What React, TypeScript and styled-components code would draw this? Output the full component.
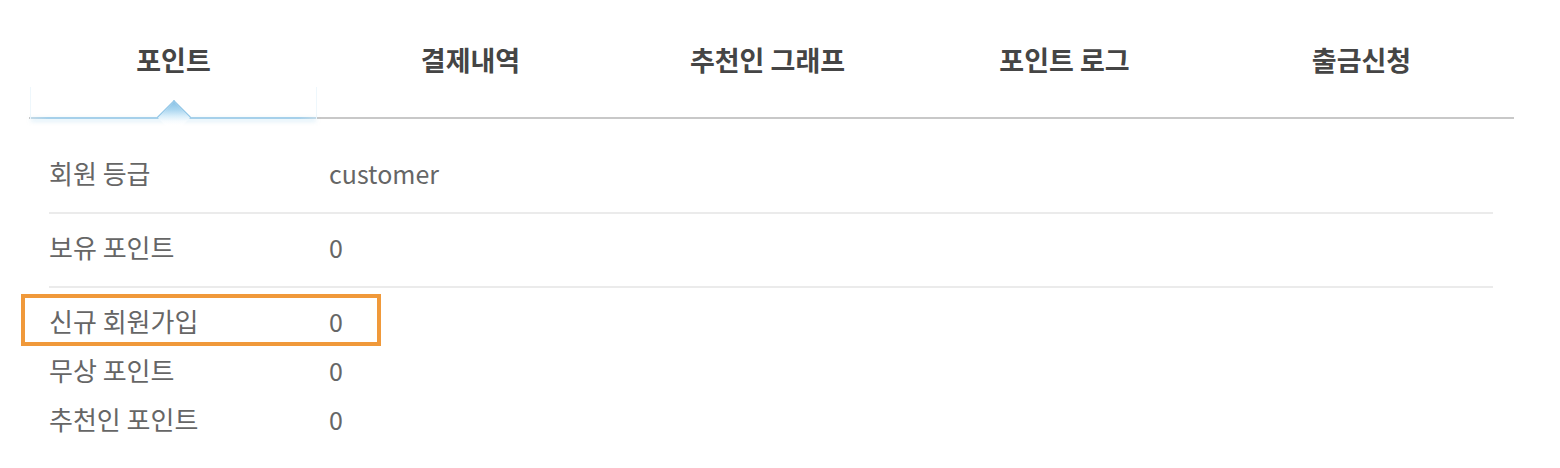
import React from "react";
import styled, { createGlobalStyle } from "styled-components";

const GlobalStyle = createGlobalStyle`
  html, body {
    margin: 0;
    padding: 0;
    background: #ffffff;
  }
  body {
    font-family: "Noto Sans CJK KR", "Noto Sans", sans-serif;
  }
`;

const Page = styled.div`
  width: 1560px;
  height: 468px;
  overflow: hidden;
  background: #fff;
`;

const TabBar = styled.nav`
  display: flex;
  margin-left: 29px;
  width: 1485px;
  border-bottom: 2px solid #c8c8c8;
`;

const Tab = styled.div<{ $active?: boolean }>`
  position: relative;
  width: 297px;
  height: 117px;
  box-sizing: border-box;
  padding: 42px 8px 0 0;
  display: flex;
  justify-content: center;
  align-items: flex-start;
  font-size: 27px;
  line-height: 36px;
  font-weight: 700;
  color: #454545;
  cursor: pointer;
`;

const ActiveMark = styled.span`
  position: absolute;
  left: 1px;
  right: 9px;
  top: 87px;
  bottom: -2px;
  border-left: 1px solid #eef7fc;
  border-right: 1px solid #eef7fc;
  pointer-events: none;

  &::after {
    content: "";
    position: absolute;
    left: 0;
    right: 0;
    bottom: 0;
    height: 2px;
    background: linear-gradient(
      to right,
      #c3d9e6 0%,
      #a6d0ea 6%,
      #a6d0ea 94%,
      #c3d9e6 100%
    );
    box-shadow: 0 2px 4px rgba(150, 205, 236, 0.5);
  }
`;

const Diamond = styled.span`
  position: absolute;
  left: 50%;
  bottom: -10px;
  width: 24px;
  height: 24px;
  margin-left: -12px;
  transform: rotate(45deg);
  z-index: 2;
  box-sizing: border-box;
  border-top: 1px solid #86c0e4;
  border-left: 1px solid #86c0e4;
  background: linear-gradient(
    to bottom right,
    #86c1e5 0%,
    #aad6f0 25%,
    #d9eefa 45%,
    #f6fbfe 60%,
    #ffffff 72%
  );
`;

const Table = styled.div`
  margin-left: 49px;
  width: 1444px;
  padding-top: 21px;
`;

const Row = styled.div<{ $divided?: boolean }>`
  position: relative;
  display: flex;
  align-items: center;
  height: ${(p) => (p.$divided ? "74px" : "49px")};
  box-sizing: border-box;
  padding-bottom: ${(p) => (p.$divided ? "6px" : "0")};
  border-bottom: ${(p) => (p.$divided ? "2px solid #ebebeb" : "none")};
  line-height: 36px;
  color: #666666;
`;

const Plain = styled.div`
  padding-top: 8px;
`;

const Label = styled.div`
  width: 280px;
  flex: none;
  font-size: 26px;
`;

const Value = styled.div`
  flex: 1;
  font-size: 25px;
`;

const Highlight = styled.span`
  position: absolute;
  left: -28px;
  top: -2px;
  width: 360px;
  height: 52px;
  box-sizing: border-box;
  border: 4px solid #f0993a;
  pointer-events: none;
`;

const tabs = ["포인트", "결제내역", "추천인 그래프", "포인트 로그", "출금신청"];

const divided = [
  { label: "회원 등급", value: "customer" },
  { label: "보유 포인트", value: "0" },
];

const plain = [
  { label: "신규 회원가입", value: "0", highlight: true },
  { label: "무상 포인트", value: "0" },
  { label: "추천인 포인트", value: "0" },
];

export default function App() {
  return (
    <Page>
      <GlobalStyle />
      <TabBar>
        {tabs.map((t, i) => (
          <Tab key={t} $active={i === 0}>
            {t}
            {i === 0 && (
              <ActiveMark>
                <Diamond />
              </ActiveMark>
            )}
          </Tab>
        ))}
      </TabBar>
      <Table>
        {divided.map((r) => (
          <Row key={r.label} $divided>
            <Label>{r.label}</Label>
            <Value>{r.value}</Value>
          </Row>
        ))}
        <Plain>
          {plain.map((r) => (
            <Row key={r.label}>
              {r.highlight && <Highlight />}
              <Label>{r.label}</Label>
              <Value>{r.value}</Value>
            </Row>
          ))}
        </Plain>
      </Table>
    </Page>
  );
}
